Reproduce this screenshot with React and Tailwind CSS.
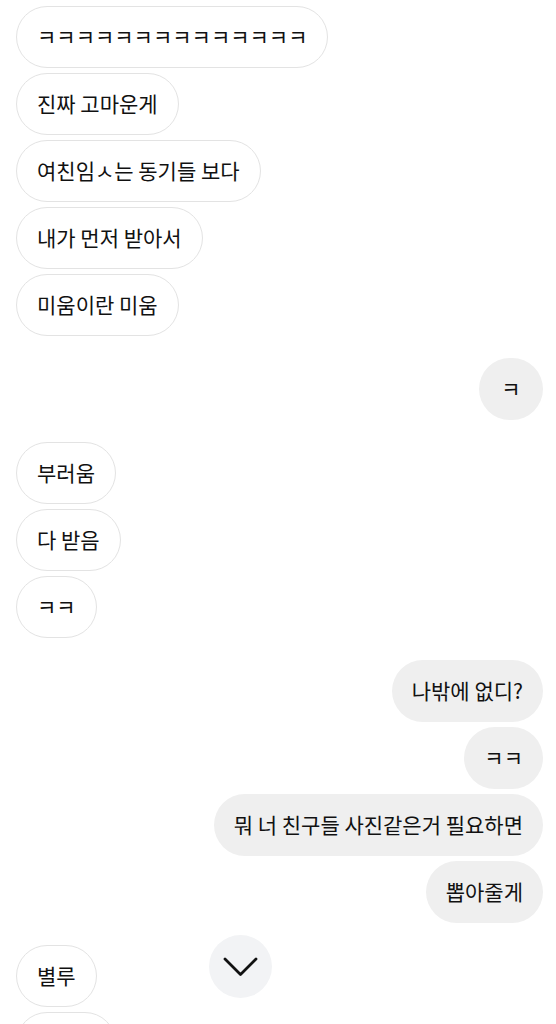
const groups = [
  { me: false, items: ["ㅋㅋㅋㅋㅋㅋㅋㅋㅋㅋㅋㅋㅋㅋ", "진짜 고마운게", "여친임ㅅ는 동기들 보다", "내가 먼저 받아서", "미움이란 미움"] },
  { me: true, items: ["ㅋ"] },
  { me: false, items: ["부러움", "다 받음", "ㅋㅋ"] },
  { me: true, items: ["나밖에 없디?", "ㅋㅋ", "뭐 너 친구들 사진같은거 필요하면", "뽑아줄게"] },
  { me: false, items: ["별루", "ㅋㅋㅋ"] },
];

function Bubble({ text, me }) {
  return (
    <div
      className={`h-[62px] min-w-[64px] px-5 flex items-center justify-center rounded-full text-[21px] text-[#111] whitespace-nowrap ${
        me ? "bg-[#efefef]" : "bg-white border border-[#e3e3e3]"
      }`}
    >
      {text}
    </div>
  );
}

export default function App() {
  return (
    <div
      className="relative w-[556px] h-[1024px] overflow-hidden bg-white"
      style={{ fontFamily: '"Noto Sans CJK KR", "Noto Sans", sans-serif' }}
    >
      <div className="flex flex-col gap-[22px] pt-[6px] pl-4 pr-[13px]">
        {groups.map((g, i) => (
          <div key={i} className={`flex flex-col gap-[5px] ${g.me ? "items-end" : "items-start"}`}>
            {g.items.map((t, j) => (
              <Bubble key={j} text={t} me={g.me} />
            ))}
          </div>
        ))}
      </div>
      <button className="absolute left-[209px] top-[935px] w-[63px] h-[63px] rounded-full bg-[#f2f3f5] flex items-center justify-center">
        <svg width="63" height="63" viewBox="0 0 63 63" fill="none">
          <path d="M16 24 L31.5 39.5 L47 24" stroke="#111" strokeWidth="2.8" strokeLinecap="round" strokeLinejoin="round" />
        </svg>
      </button>
    </div>
  );
}
